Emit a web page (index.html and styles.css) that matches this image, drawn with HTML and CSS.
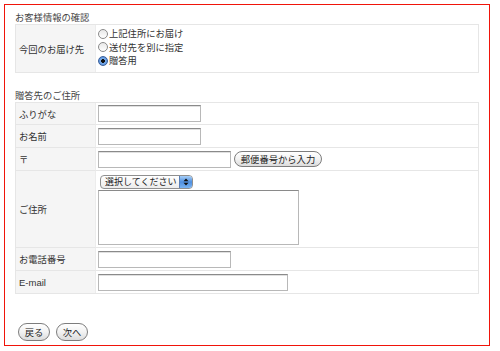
FILE: index.html
```html
<!DOCTYPE html>
<html lang="ja">
<head>
<meta charset="utf-8">
<link rel="stylesheet" href="styles.css">
</head>
<body>
<div class="frame">
  <div class="heading heading-first">お客様情報の確認</div>
  <div class="form-table table-delivery">
    <div class="th">今回のお届け先</div>
    <div class="td radios">
      <label class="radio"><span class="dot"></span>上記住所にお届け</label>
      <label class="radio"><span class="dot"></span>送付先を別に指定</label>
      <label class="radio"><span class="dot checked"></span>贈答用</label>
    </div>
  </div>

  <div class="heading heading-second">贈答先のご住所</div>
  <div class="form-table table-address">
    <div class="th row-first">ふりがな</div>
    <div class="td row-first"><span class="input w103"></span></div>

    <div class="th">お名前</div>
    <div class="td"><span class="input w103"></span></div>

    <div class="th">〒</div>
    <div class="td"><span class="input w133"></span><span class="btn zip-btn">郵便番号から入力</span></div>

    <div class="th row-tall">ご住所</div>
    <div class="td row-tall address">
      <div class="select"><span class="select-text">選択してください</span><span class="select-arrows"><svg width="8" height="10" viewBox="0 0 8 10"><path d="M4 1.5 L6.5 4.2 L1.5 4.2 Z M4 8.5 L6.5 5.8 L1.5 5.8 Z" fill="#111"/></svg></span></div>
      <span class="textarea"></span>
    </div>

    <div class="th">お電話番号</div>
    <div class="td"><span class="input w133"></span></div>

    <div class="th latin">E-mail</div>
    <div class="td"><span class="input w190"></span></div>
  </div>

  <div class="actions">
    <span class="btn nav-btn">戻る</span>
    <span class="btn nav-btn">次へ</span>
  </div>
</div>
</body>
</html>
```

FILE: styles.css
```css
html, body {
  margin: 0;
  padding: 0;
  background: #fff;
}

body {
  font-family: "Noto Sans CJK JP", "Noto Sans", sans-serif;
  font-size: 9.3px;
  color: #333;
}

.frame {
  margin: 4px 0 0 4px;
  width: 486px;
  height: 342px;
  box-sizing: border-box;
  border: 1px solid #f0140a;
  padding: 5px 0 0 10px;
  overflow: hidden;
}

.heading {
  height: 14px;
  line-height: 14px;
  color: #444;
}

.heading-second {
  margin-top: 16px;
  height: 13px;
  line-height: 13px;
}

.form-table {
  width: 464px;
  box-sizing: border-box;
  border: 1px solid #e6e6e6;
  display: grid;
  grid-template-columns: 80px 1fr;
}

.th {
  background: #f5f5f5;
  border-right: 1px solid #ececec;
  display: flex;
  align-items: center;
  padding-left: 3px;
  color: #333;
  overflow: hidden;
}

.td {
  display: flex;
  align-items: center;
  padding-left: 2px;
  overflow: hidden;
}

.table-address .th,
.table-address .td {
  height: 22px;
  border-top: 1px solid #e6e6e6;
}

.table-address .row-first {
  height: 21px;
  border-top: none;
}

.table-address .row-tall {
  height: 76px;
}

.table-address .address {
  height: 72px;
  padding-top: 4px;
}

.latin {
  font-family: "Liberation Sans", Arial, sans-serif;
  font-size: 9.5px;
}

.table-delivery .th {
  height: 47px;
}

.radios {
  flex-direction: column;
  align-items: flex-start;
  justify-content: flex-start;
  padding-top: 2px;
  padding-left: 2px;
}

.radio {
  height: 13.5px;
  line-height: 13.5px;
  display: flex;
  align-items: center;
  color: #333;
}

.dot {
  width: 8px;
  height: 8px;
  border-radius: 50%;
  border: 1px solid #8a8a8a;
  background: linear-gradient(#e8e8e8, #fff);
  margin-right: 1px;
  box-sizing: content-box;
}

.dot.checked {
  border-color: #3a5f9a;
  background: radial-gradient(circle at 50% 50%, #111 0 1.6px, #7fb0ea 2.2px, #3a78d0 100%);
}

.input {
  display: inline-block;
  height: 17px;
  box-sizing: border-box;
  border: 1px solid #b8b8b8;
  border-top-color: #8a8a8a;
  box-shadow: inset 0 1px 0 #e0e0e0;
  background: #fff;
}

.w103 { width: 103px; }
.w133 { width: 133px; }
.w190 { width: 190px; }

.btn {
  display: inline-flex;
  align-items: center;
  justify-content: center;
  box-sizing: border-box;
  border: 1px solid #7d7d7d;
  border-radius: 9px;
  background: linear-gradient(#ffffff, #f2f2f2 50%, #dcdcdc);
  color: #222;
  font-size: 9.3px;
  white-space: nowrap;
}

.zip-btn {
  margin-left: 3px;
  width: 88px;
  height: 16px;
}

.address {
  flex-direction: column;
  align-items: flex-start;
  justify-content: flex-start;
}

.select {
  flex: none;
  margin-left: 2px;
  width: 93px;
  height: 14px;
  box-sizing: border-box;
  border: 1px solid #8f8f8f;
  border-radius: 4px;
  background: linear-gradient(#fff, #ececec);
  display: flex;
  align-items: center;
  overflow: hidden;
}

.select-text {
  flex: 1;
  min-width: 0;
  padding-left: 4px;
  color: #222;
  line-height: 12px;
  font-size: 9px;
  white-space: nowrap;
  overflow: hidden;
}

.select-arrows {
  flex: none;
  width: 12px;
  height: 12px;
  background: linear-gradient(#a8d0f8, #4f8fe0 50%, #7ab4f2);
  border-left: 1px solid #5a7fb5;
  display: flex;
  align-items: center;
  justify-content: center;
}

.textarea {
  flex: none;
  display: block;
  margin-top: 1px;
  width: 201px;
  height: 55px;
  box-sizing: border-box;
  border: 1px solid #b8b8b8;
  border-top-color: #8a8a8a;
  background: #fff;
}

.actions {
  margin-top: 29px;
  margin-left: 3px;
  display: flex;
  gap: 6px;
}

.nav-btn {
  width: 32px;
  height: 18px;
}
```
